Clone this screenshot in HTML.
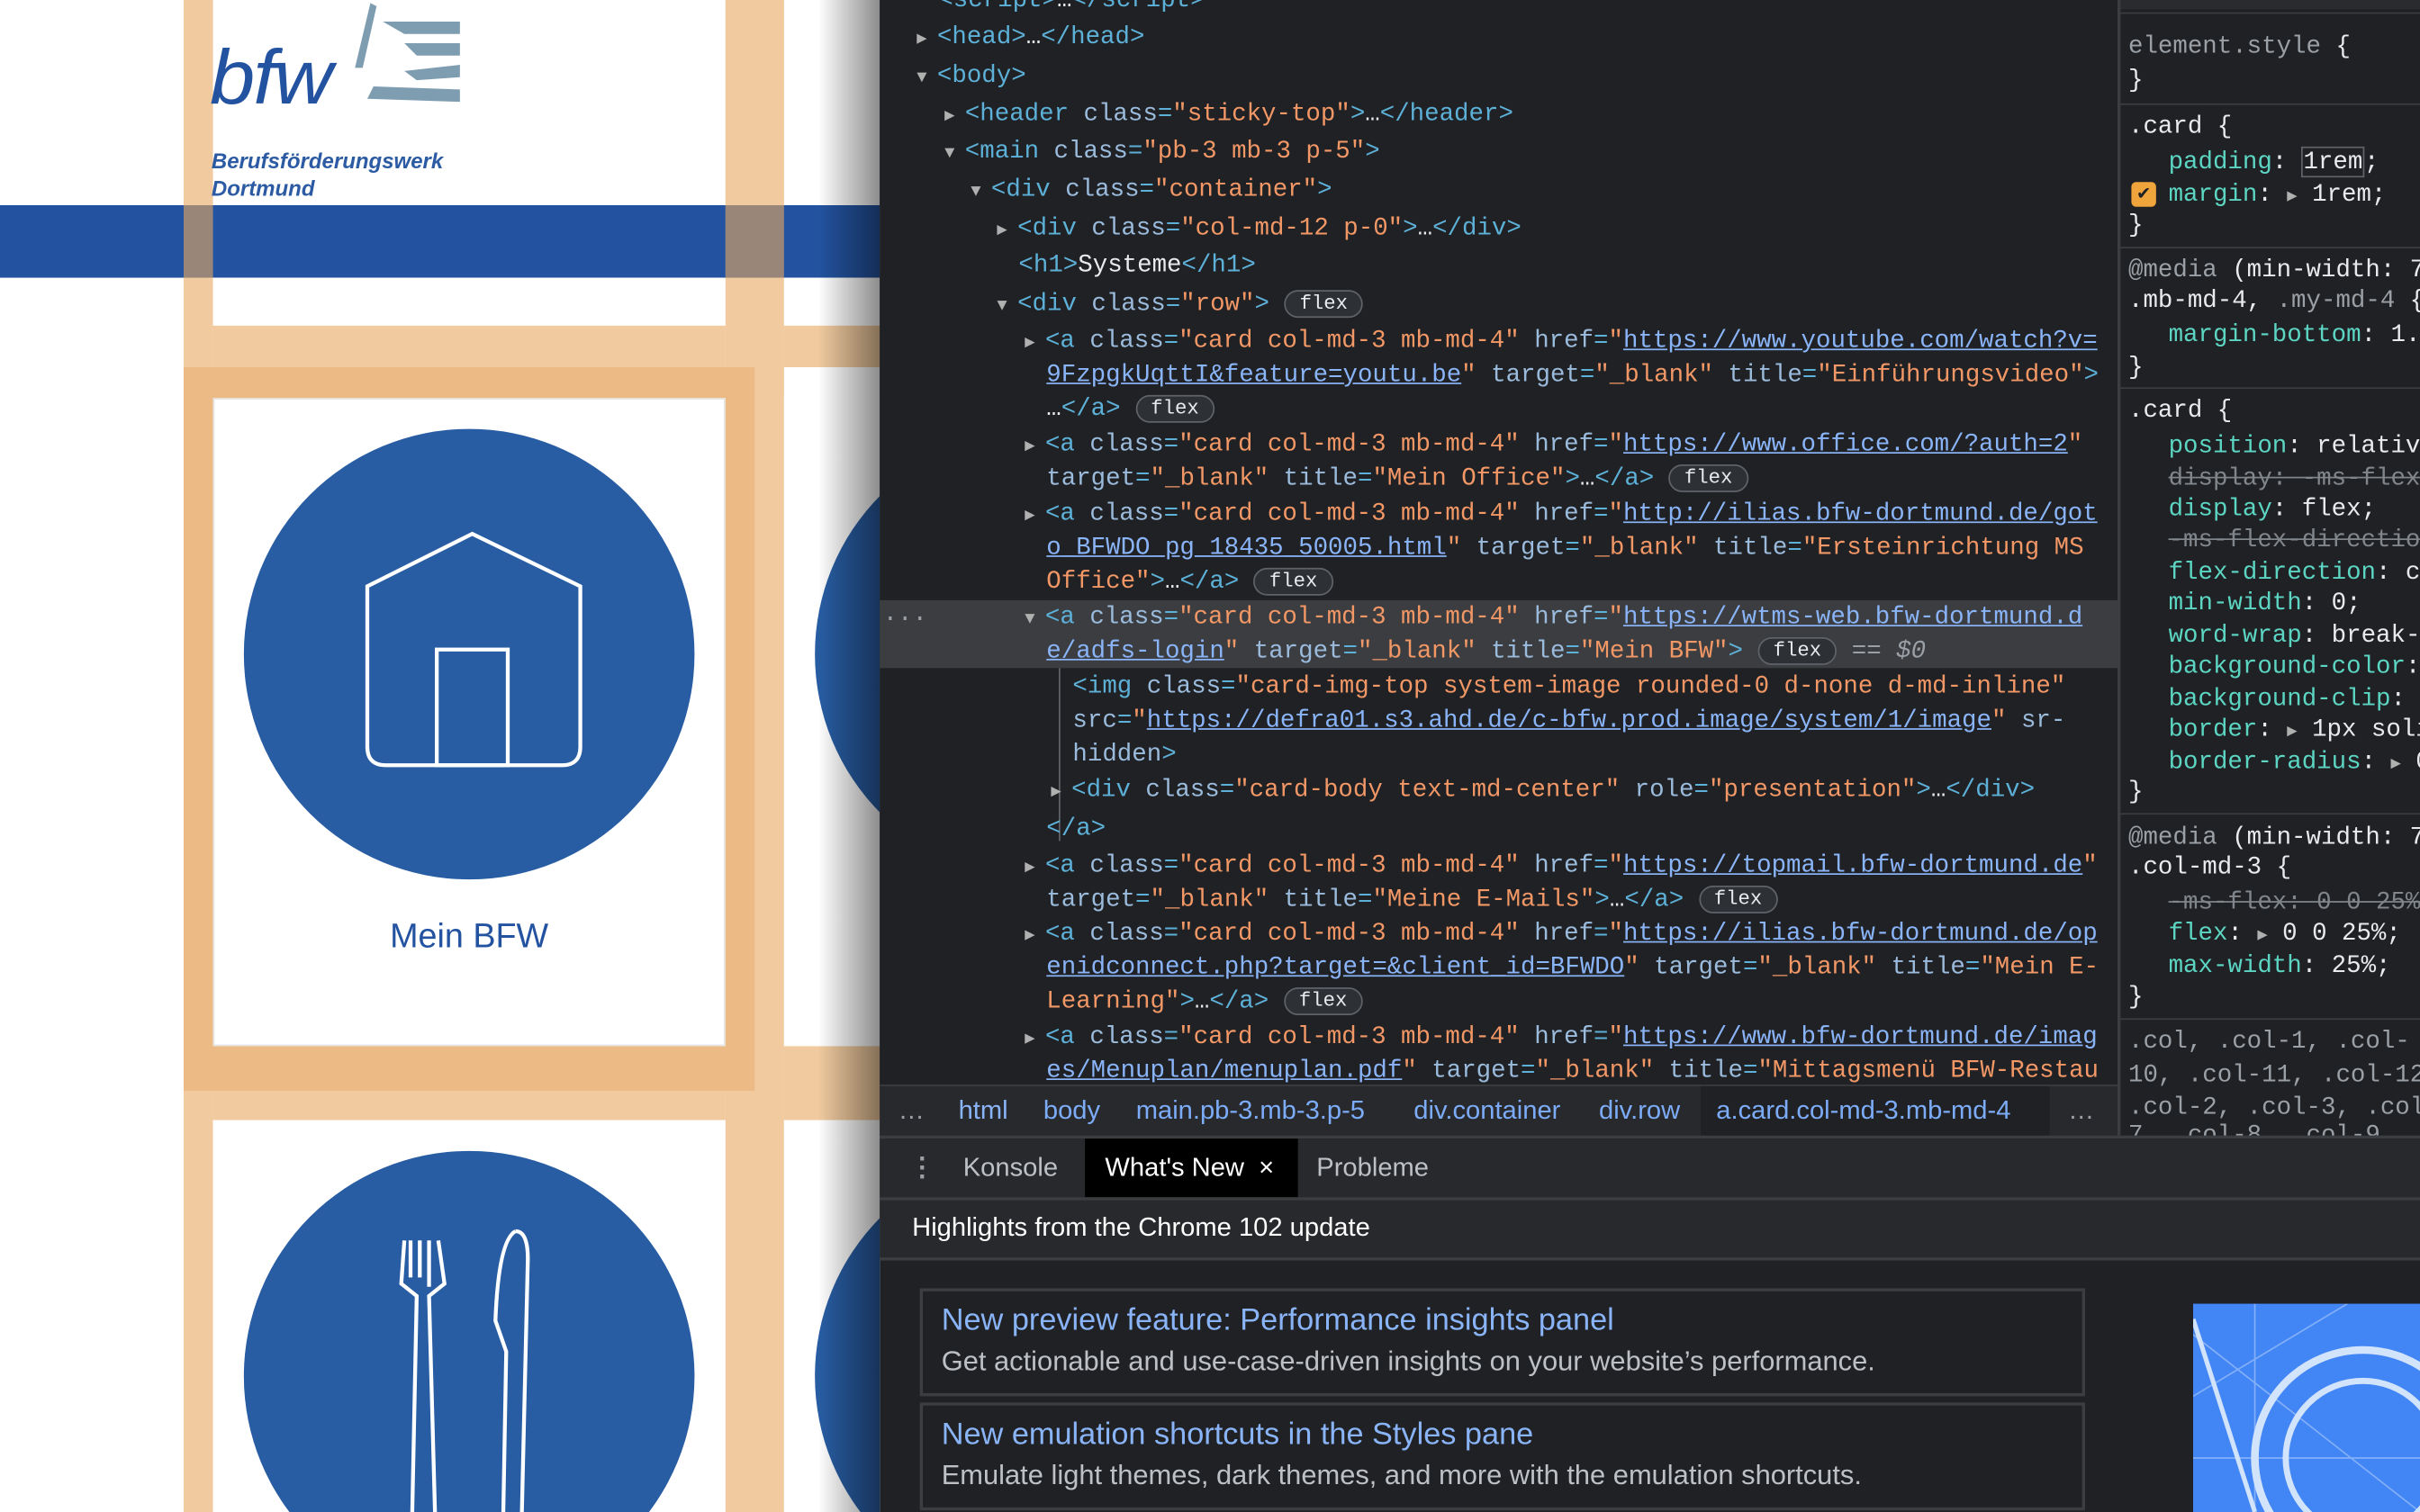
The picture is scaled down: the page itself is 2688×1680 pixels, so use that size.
<!DOCTYPE html>
<html><head><meta charset="utf-8"><style>
*{margin:0;padding:0;box-sizing:border-box}
html,body{width:2688px;height:1680px;overflow:hidden;background:#202124}
#w{position:absolute;left:0;top:0;width:1568px;height:980px;transform:scale(1.714286);transform-origin:0 0;overflow:hidden}
.a{position:absolute}
.mono{font-family:"Liberation Mono",monospace;font-size:16px;white-space:pre;line-height:22px;color:#e8eaed}
.t{color:#5db0d7}.n{color:#9bbbdc}.v{color:#f29766}.l{color:#8ab4f8;text-decoration:underline}
.fl{display:inline-block;border:1px solid #5f6368;border-radius:10px;font-size:13px;line-height:16px;padding:0 9px;background:#2d3035;color:#e8eaed;vertical-align:1px}
.ar{color:#b0b0b0;font-size:11px}
.sans{font-family:"Liberation Sans",sans-serif}
.p{color:#5cd5c3}
</style></head><body><div id="w">
<div class="a" style="left:0;top:0;width:570px;height:980px;overflow:hidden;background:#fff">
<div class="a" style="left:0;top:133px;width:570px;height:47px;background:#2353a0"></div>
<div class="a" style="left:119px;top:0;width:19px;height:980px;background:rgba(232,168,95,.6)"></div>
<div class="a" style="left:470px;top:0;width:38px;height:980px;background:rgba(232,168,95,.6)"></div>
<div class="a" style="left:138px;top:211px;width:332px;height:27px;background:rgba(232,168,95,.6)"></div>
<div class="a" style="left:508px;top:211px;width:62px;height:27px;background:rgba(232,168,95,.6)"></div>
<div class="a" style="left:138px;top:707px;width:332px;height:19px;background:rgba(232,168,95,.6)"></div>
<div class="a" style="left:508px;top:678px;width:62px;height:48px;background:rgba(232,168,95,.6)"></div>
<div class="a" style="left:119px;top:238px;width:370px;height:469px;background:#ecbb85"></div>
<div class="a" style="left:138px;top:258px;width:332px;height:420px;background:#fff;border:1px solid #e5e5e5"></div>
<div class="a" style="left:138px;top:726px;width:332px;height:260px;background:#fff"></div>
<div class="a" style="left:508px;top:258px;width:62px;height:420px;background:#fff"></div>
<div class="a" style="left:508px;top:726px;width:62px;height:260px;background:#fff"></div>
<div class="a" style="left:138px;top:180px;width:332px;height:31px;background:#fff"></div>
<div class="a" style="left:508px;top:180px;width:62px;height:31px;background:#fff"></div>
<div class="a sans" style="left:136px;top:20px;font-size:50px;line-height:60px;font-style:italic;color:#2353a0;letter-spacing:-1px;transform:scaleX(1.05);transform-origin:0 0">bfw</div>
<svg class="a" style="left:218px;top:0" width="84" height="80"><path d="M22 2 L12 44 L17 44 L26 4Z" fill="#7f9db1"/><path d="M30 14 L80 14 L80 22 L44 22Z M44 28 L80 28 L80 36 L52 36Z M44 46 L80 42 L80 50 L52 52Z M24 56 L80 58 L80 66 L20 64Z" fill="#7f9db1"/></svg>
<div class="a sans" style="left:137px;top:95px;font-size:14px;font-style:italic;font-weight:bold;color:#2c5ba3;line-height:18px">Berufsförderungswerk<br>Dortmund</div>
<div class="a" style="left:158px;top:278px;width:292px;height:292px;border-radius:50%;background:#285da3"></div>
<svg class="a" style="left:158px;top:278px" width="292" height="292"><path d="M148 68 L218 102 L218 206 Q218 218 206 218 L92 218 Q80 218 80 206 L80 102 Z" fill="none" stroke="#fff" stroke-width="2.5"/><rect x="125" y="143" width="46" height="75" fill="none" stroke="#fff" stroke-width="2.5"/></svg>
<div class="a sans" style="left:138px;top:594px;width:332px;text-align:center;font-size:22px;color:#2353a0">Mein BFW</div>
<div class="a" style="left:158px;top:746px;width:292px;height:292px;border-radius:50%;background:#285da3"></div>
<svg class="a" style="left:158px;top:746px" width="292" height="292"><path d="M104 58 L102 86 L112 94 L109 240 M120 58 L120 88 M126 58 L130 86 L120 94 L124 240 M108 58 V82 M114 58 V82" fill="none" stroke="#fff" stroke-width="2.5"/><path d="M176 52 Q165 58 163 110 L170 130 L168 240 M176 52 Q184 52 184 70 L180 240" fill="none" stroke="#fff" stroke-width="2.5"/></svg>
<div class="a" style="left:528px;top:278px;width:292px;height:292px;border-radius:50%;background:#285da3"></div>
<div class="a" style="left:528px;top:746px;width:292px;height:292px;border-radius:50%;background:#285da3"></div>
<div class="a" style="left:530px;top:0;width:40px;height:980px;background:linear-gradient(90deg,rgba(0,0,0,0),rgba(0,0,0,.45))"></div>
</div>
<div class="a" style="left:570px;top:0;width:802px;height:705px;background:#202124"></div>
<div class="a" style="left:570px;top:389px;width:802px;height:44px;background:#3c3d40"></div>
<div class="a mono" style="left:572px;top:390px;color:#9aa0a6">···</div>
<div class="a" style="left:686px;top:433px;width:1px;height:112px;background:#5f6368"></div>
<div class="a mono" style="left:0;top:0;width:1372px;height:705px;overflow:hidden">
<div class="a" style="left:608px;top:-11px"><span class="t">&lt;script&gt;</span>…<span class="t">&lt;/script&gt;</span></div>
<div class="a" style="left:594px;top:13px"><span class="ar">▶ </span><span class="t">&lt;head&gt;</span>…<span class="t">&lt;/head&gt;</span></div>
<div class="a" style="left:594px;top:38px"><span class="ar">▼ </span><span class="t">&lt;body&gt;</span></div>
<div class="a" style="left:612px;top:63px"><span class="ar">▶ </span><span class="t">&lt;header </span><span class="n">class</span><span class="t">=</span><span class="v">"sticky-top"</span><span class="t">&gt;</span>…<span class="t">&lt;/header&gt;</span></div>
<div class="a" style="left:612px;top:87px"><span class="ar">▼ </span><span class="t">&lt;main </span><span class="n">class</span><span class="t">=</span><span class="v">"pb-3 mb-3 p-5"</span><span class="t">&gt;</span></div>
<div class="a" style="left:629px;top:112px"><span class="ar">▼ </span><span class="t">&lt;div </span><span class="n">class</span><span class="t">=</span><span class="v">"container"</span><span class="t">&gt;</span></div>
<div class="a" style="left:646px;top:137px"><span class="ar">▶ </span><span class="t">&lt;div </span><span class="n">class</span><span class="t">=</span><span class="v">"col-md-12 p-0"</span><span class="t">&gt;</span>…<span class="t">&lt;/div&gt;</span></div>
<div class="a" style="left:660px;top:161px"><span class="t">&lt;h1&gt;</span>Systeme<span class="t">&lt;/h1&gt;</span></div>
<div class="a" style="left:646px;top:186px"><span class="ar">▼ </span><span class="t">&lt;div </span><span class="n">class</span><span class="t">=</span><span class="v">"row"</span><span class="t">&gt;</span> <span class="fl">flex</span></div>
<div class="a" style="left:664px;top:210px"><span class="ar">▶ </span><span class="t">&lt;a </span><span class="n">class</span><span class="t">=</span><span class="v">"card col-md-3 mb-md-4"</span> <span class="n">href</span><span class="t">=</span><span class="v">"</span><span class="l">https://www.youtube.com/watch?v=</span></div>
<div class="a" style="left:678px;top:232px"><span class="l">9FzpgkUqttI&amp;feature=youtu.be</span><span class="v">"</span> <span class="n">target</span><span class="t">=</span><span class="v">"_blank"</span> <span class="n">title</span><span class="t">=</span><span class="v">"Einführungsvideo"</span><span class="t">&gt;</span></div>
<div class="a" style="left:678px;top:254px">…<span class="t">&lt;/a&gt;</span> <span class="fl">flex</span></div>
<div class="a" style="left:664px;top:277px"><span class="ar">▶ </span><span class="t">&lt;a </span><span class="n">class</span><span class="t">=</span><span class="v">"card col-md-3 mb-md-4"</span> <span class="n">href</span><span class="t">=</span><span class="v">"</span><span class="l">https://www.office.com/?auth=2</span><span class="v">"</span></div>
<div class="a" style="left:678px;top:299px"><span class="n">target</span><span class="t">=</span><span class="v">"_blank"</span> <span class="n">title</span><span class="t">=</span><span class="v">"Mein Office"</span><span class="t">&gt;</span>…<span class="t">&lt;/a&gt;</span> <span class="fl">flex</span></div>
<div class="a" style="left:664px;top:322px"><span class="ar">▶ </span><span class="t">&lt;a </span><span class="n">class</span><span class="t">=</span><span class="v">"card col-md-3 mb-md-4"</span> <span class="n">href</span><span class="t">=</span><span class="v">"</span><span class="l">http://ilias.bfw-dortmund.de/got</span></div>
<div class="a" style="left:678px;top:344px"><span class="l">o_BFWDO_pg_18435_50005.html</span><span class="v">"</span> <span class="n">target</span><span class="t">=</span><span class="v">"_blank"</span> <span class="n">title</span><span class="t">=</span><span class="v">"Ersteinrichtung MS</span></div>
<div class="a" style="left:678px;top:366px"><span class="v">Office"</span><span class="t">&gt;</span>…<span class="t">&lt;/a&gt;</span> <span class="fl">flex</span></div>
<div class="a" style="left:664px;top:389px"><span class="ar">▼ </span><span class="t">&lt;a </span><span class="n">class</span><span class="t">=</span><span class="v">"card col-md-3 mb-md-4"</span> <span class="n">href</span><span class="t">=</span><span class="v">"</span><span class="l">https://wtms-web.bfw-dortmund.d</span></div>
<div class="a" style="left:678px;top:411px"><span class="l">e/adfs-login</span><span class="v">"</span> <span class="n">target</span><span class="t">=</span><span class="v">"_blank"</span> <span class="n">title</span><span class="t">=</span><span class="v">"Mein BFW"</span><span class="t">&gt;</span> <span class="fl">flex</span> <span style="color:#9aa0a6">== <i>$0</i></span></div>
<div class="a" style="left:695px;top:434px"><span class="t">&lt;img </span><span class="n">class</span><span class="t">=</span><span class="v">"card-img-top system-image rounded-0 d-none d-md-inline"</span></div>
<div class="a" style="left:695px;top:456px"><span class="n">src</span><span class="t">=</span><span class="v">"</span><span class="l">https://defra01.s3.ahd.de/c-bfw.prod.image/system/1/image</span><span class="v">"</span> <span class="n">sr-</span></div>
<div class="a" style="left:695px;top:478px"><span class="n">hidden</span><span class="t">&gt;</span></div>
<div class="a" style="left:681px;top:501px"><span class="ar">▶ </span><span class="t">&lt;div </span><span class="n">class</span><span class="t">=</span><span class="v">"card-body text-md-center"</span> <span class="n">role</span><span class="t">=</span><span class="v">"presentation"</span><span class="t">&gt;</span>…<span class="t">&lt;/div&gt;</span></div>
<div class="a" style="left:678px;top:526px"><span class="t">&lt;/a&gt;</span></div>
<div class="a" style="left:664px;top:550px"><span class="ar">▶ </span><span class="t">&lt;a </span><span class="n">class</span><span class="t">=</span><span class="v">"card col-md-3 mb-md-4"</span> <span class="n">href</span><span class="t">=</span><span class="v">"</span><span class="l">https://topmail.bfw-dortmund.de</span><span class="v">"</span></div>
<div class="a" style="left:678px;top:572px"><span class="n">target</span><span class="t">=</span><span class="v">"_blank"</span> <span class="n">title</span><span class="t">=</span><span class="v">"Meine E-Mails"</span><span class="t">&gt;</span>…<span class="t">&lt;/a&gt;</span> <span class="fl">flex</span></div>
<div class="a" style="left:664px;top:594px"><span class="ar">▶ </span><span class="t">&lt;a </span><span class="n">class</span><span class="t">=</span><span class="v">"card col-md-3 mb-md-4"</span> <span class="n">href</span><span class="t">=</span><span class="v">"</span><span class="l">https://ilias.bfw-dortmund.de/op</span></div>
<div class="a" style="left:678px;top:616px"><span class="l">enidconnect.php?target=&amp;client_id=BFWDO</span><span class="v">"</span> <span class="n">target</span><span class="t">=</span><span class="v">"_blank"</span> <span class="n">title</span><span class="t">=</span><span class="v">"Mein E-</span></div>
<div class="a" style="left:678px;top:638px"><span class="v">Learning"</span><span class="t">&gt;</span>…<span class="t">&lt;/a&gt;</span> <span class="fl">flex</span></div>
<div class="a" style="left:664px;top:661px"><span class="ar">▶ </span><span class="t">&lt;a </span><span class="n">class</span><span class="t">=</span><span class="v">"card col-md-3 mb-md-4"</span> <span class="n">href</span><span class="t">=</span><span class="v">"</span><span class="l">https://www.bfw-dortmund.de/imag</span></div>
<div class="a" style="left:678px;top:683px"><span class="l">es/Menuplan/menuplan.pdf</span><span class="v">"</span> <span class="n">target</span><span class="t">=</span><span class="v">"_blank"</span> <span class="n">title</span><span class="t">=</span><span class="v">"Mittagsmenü BFW-Restau</span></div>
</div>
<div class="a sans" style="left:570px;top:703px;width:802px;height:33px;background:#28292c;border-top:1px solid #3c3d40;font-size:17px;line-height:32px;color:#7cacf8">
<span class="a" style="left:12px;color:#9aa0a6">…</span>
<span class="a" style="left:51px;color:#8ab4f8">html</span>
<span class="a" style="left:106px">body</span>
<span class="a" style="left:166px">main.pb-3.mb-3.p-5</span>
<span class="a" style="left:346px">div.container</span>
<span class="a" style="left:466px">div.row</span>
<span class="a" style="left:532px;width:226px;height:32px;background:#202124;padding-left:10px">a.card.col-md-3.mb-md-4</span>
<span class="a" style="left:770px;color:#9aa0a6">…</span>
</div>
<div class="a" style="left:1372px;top:0;width:196px;height:736px;background:#202124;border-left:2px solid #3c3d40"></div>
<div class="a mono" style="left:1374px;top:0;width:194px;height:736px;overflow:hidden;font-size:16px">
<div class="a" style="left:0;top:-14px;width:194px;height:20px;background:#2a2b2e"></div>
<div class="a" style="left:0;top:8px;width:194px;height:1px;background:#3c3d40"></div>
<div class="a" style="left:5px;top:19px"><span style="color:#9aa0a6">element.style</span> {</div>
<div class="a" style="left:5px;top:41px">}</div>
<div class="a" style="left:0;top:67px;width:194px;height:1px;background:#3c3d40"></div>
<div class="a" style="left:5px;top:71px">.card {</div>
<div class="a" style="left:31px;top:94px"><span class="p">padding</span>: <span style="border:1px solid #5f6368">1rem</span>;</div>
<div class="a" style="left:7px;top:118px;width:16px;height:16px;background:#f0a43c;border-radius:3px;color:#202124;font-size:13px;line-height:16px;text-align:center">✔</div>
<div class="a" style="left:31px;top:115px"><span class="p">margin</span>: <span class="ar">▶</span> 1rem;</div>
<div class="a" style="left:5px;top:135px">}</div>
<div class="a" style="left:0;top:160px;width:194px;height:1px;background:#3c3d40"></div>
<div class="a" style="left:5px;top:164px"><span style="color:#9aa0a6">@media</span> (min-width: 7</div>
<div class="a" style="left:5px;top:184px">.mb-md-4, <span style="color:#9aa0a6">.my-md-4</span> {</div>
<div class="a" style="left:31px;top:206px"><span class="p">margin-bottom</span>: 1.</div>
<div class="a" style="left:5px;top:227px">}</div>
<div class="a" style="left:0;top:251px;width:194px;height:1px;background:#3c3d40"></div>
<div class="a" style="left:5px;top:255px">.card {</div>
<div class="a" style="left:31px;top:278px"><span class="p">position</span>: relativ</div>
<div class="a" style="left:31px;top:299px;color:#80868b;text-decoration:line-through">display: -ms-flex</div>
<div class="a" style="left:31px;top:319px"><span class="p">display</span>: flex;</div>
<div class="a" style="left:31px;top:339px;color:#80868b;text-decoration:line-through">-ms-flex-directio</div>
<div class="a" style="left:31px;top:360px"><span class="p">flex-direction</span>: c</div>
<div class="a" style="left:31px;top:380px"><span class="p">min-width</span>: 0;</div>
<div class="a" style="left:31px;top:401px"><span class="p">word-wrap</span>: break-</div>
<div class="a" style="left:31px;top:421px"><span class="p">background-color</span>:</div>
<div class="a" style="left:31px;top:442px"><span class="p">background-clip</span>:</div>
<div class="a" style="left:31px;top:462px"><span class="p">border</span>: <span class="ar">▶</span> 1px soli</div>
<div class="a" style="left:31px;top:483px"><span class="p">border-radius</span>: <span class="ar">▶</span> 0</div>
<div class="a" style="left:5px;top:502px">}</div>
<div class="a" style="left:0;top:527px;width:194px;height:1px;background:#3c3d40"></div>
<div class="a" style="left:5px;top:532px"><span style="color:#9aa0a6">@media</span> (min-width: 7</div>
<div class="a" style="left:5px;top:551px">.col-md-3 {</div>
<div class="a" style="left:31px;top:574px;color:#80868b;text-decoration:line-through">-ms-flex: 0 0 25%</div>
<div class="a" style="left:31px;top:594px"><span class="p">flex</span>: <span class="ar">▶</span> 0 0 25%;</div>
<div class="a" style="left:31px;top:615px"><span class="p">max-width</span>: 25%;</div>
<div class="a" style="left:5px;top:635px">}</div>
<div class="a" style="left:0;top:660px;width:194px;height:1px;background:#3c3d40"></div>
<div class="a" style="left:5px;top:664px;color:#9aa0a6">.col, .col-1, .col-</div>
<div class="a" style="left:5px;top:686px;color:#9aa0a6">10, .col-11, .col-12</div>
<div class="a" style="left:5px;top:707px;color:#9aa0a6">.col-2, .col-3, .col</div>
<div class="a" style="left:5px;top:725px;color:#9aa0a6">7, .col-8, .col-9,</div>
</div>
<div class="a" style="left:570px;top:736px;width:998px;height:2px;background:#3c3d40"></div>
<div class="a sans" style="left:570px;top:738px;width:998px;height:38px;background:#28292c;font-size:17px;line-height:38px;color:#bdc1c6">
<span class="a" style="left:19px;top:0;font-weight:bold;color:#9aa0a6">⋮</span>
<span class="a" style="left:54px">Konsole</span>
<span class="a" style="left:133px;width:138px;height:38px;background:#000;color:#fff;padding-left:13px">What's New&nbsp; ×</span>
<span class="a" style="left:283px">Probleme</span>
</div>
<div class="a" style="left:570px;top:776px;width:998px;height:2px;background:#3c3d40"></div>
<div class="a sans" style="left:570px;top:778px;width:998px;height:38px;background:#28292c;font-size:17px;line-height:36px;color:#fff;padding-left:21px">Highlights from the Chrome 102 update</div>
<div class="a" style="left:570px;top:815px;width:998px;height:2px;background:#3c3d40"></div>
<div class="a sans" style="left:596px;top:835px;width:755px;height:70px;border:2px solid #3c3d40;padding:6px 0 0 12px">
<div style="font-size:20px;color:#8ab4f8;line-height:26px">New preview feature: Performance insights panel</div>
<div style="font-size:18px;color:#bdc1c6;line-height:26px">Get actionable and use-case-driven insights on your website’s performance.</div></div>
<div class="a sans" style="left:596px;top:909px;width:755px;height:70px;border:2px solid #3c3d40;padding:6px 0 0 12px">
<div style="font-size:20px;color:#8ab4f8;line-height:26px">New emulation shortcuts in the Styles pane</div>
<div style="font-size:18px;color:#bdc1c6;line-height:26px">Emulate light themes, dark themes, and more with the emulation shortcuts.</div></div>
<div class="a" style="left:1421px;top:845px;width:147px;height:135px;background:#4285f4;overflow:hidden">
<svg width="147" height="135"><g fill="none" stroke="#aecbfa" stroke-width="1" opacity=".6"><path d="M0 20 L147 135 M0 60 L100 0 M40 0 V135 M0 100 H147"/></g><circle cx="110" cy="100" r="70" fill="none" stroke="#d2e3fc" stroke-width="5"/><circle cx="110" cy="100" r="50" fill="none" stroke="#d2e3fc" stroke-width="4"/><path d="M0 10 L40 135" stroke="#d2e3fc" stroke-width="3"/></svg></div>
</div></body></html>
